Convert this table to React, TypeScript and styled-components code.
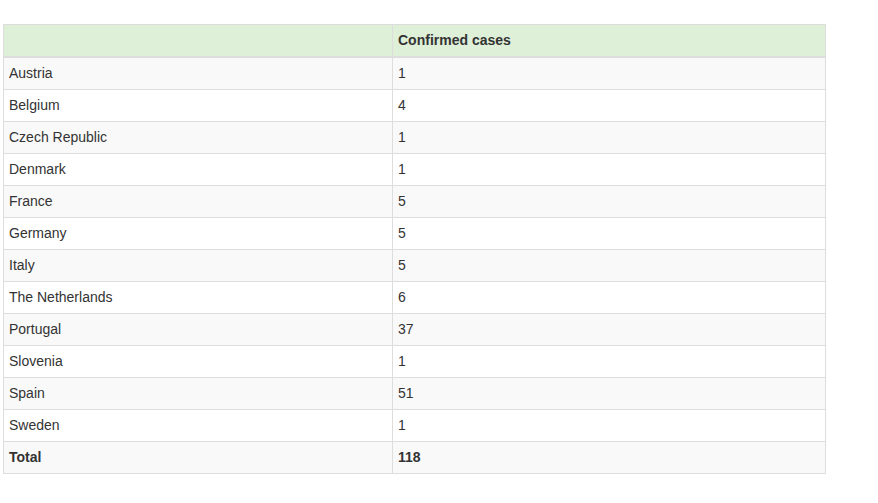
import styled, { createGlobalStyle } from 'styled-components';

const GlobalStyle = createGlobalStyle`
    body {
        margin: 0;
        background: #fff;
        font-family: 'Liberation Sans', Arial, sans-serif;
        font-size: 14px;
        color: #333;
    }
`;

const Wrapper = styled.div`
    padding: 24px 0 0 3px;
`;

const Table = styled.table`
    width: 823px;
    border-collapse: collapse;
    border-spacing: 0;
    border: 1px solid #ddd;
    table-layout: fixed;
`;

const HeadCell = styled.th<{ $first?: boolean }>`
    width: ${(p) => (p.$first ? '378px' : 'auto')};
    background: #dff0d8;
    border: 1px solid #ddd;
    border-bottom: 2px solid #ddd;
    padding: 5px;
    line-height: 21px;
    text-align: left;
    font-weight: bold;
    color: #333;
`;

const Row = styled.tr<{ $striped: boolean }>`
    background: ${(p) => (p.$striped ? '#f9f9f9' : '#fff')};
`;

const Cell = styled.td<{ $bold?: boolean }>`
    border: 1px solid #ddd;
    padding: 5px;
    line-height: 21px;
    font-weight: ${(p) => (p.$bold ? 'bold' : 'normal')};
    color: #333;
`;

const rows: [string, number][] = [
    ['Austria', 1],
    ['Belgium', 4],
    ['Czech Republic', 1],
    ['Denmark', 1],
    ['France', 5],
    ['Germany', 5],
    ['Italy', 5],
    ['The Netherlands', 6],
    ['Portugal', 37],
    ['Slovenia', 1],
    ['Spain', 51],
    ['Sweden', 1],
];

function App() {
    const total = rows.reduce((sum, r) => sum + r[1], 0);

    return (
        <>
            <GlobalStyle />
            <Wrapper>
                <Table>
                    <thead>
                        <tr>
                            <HeadCell $first />
                            <HeadCell>Confirmed cases</HeadCell>
                        </tr>
                    </thead>
                    <tbody>
                        {rows.map(([country, cases], i) => (
                            <Row key={country} $striped={i % 2 === 0}>
                                <Cell>{country}</Cell>
                                <Cell>{cases}</Cell>
                            </Row>
                        ))}
                        <Row $striped>
                            <Cell $bold>Total</Cell>
                            <Cell $bold>{total}</Cell>
                        </Row>
                    </tbody>
                </Table>
            </Wrapper>
        </>
    );
}

export default App;
